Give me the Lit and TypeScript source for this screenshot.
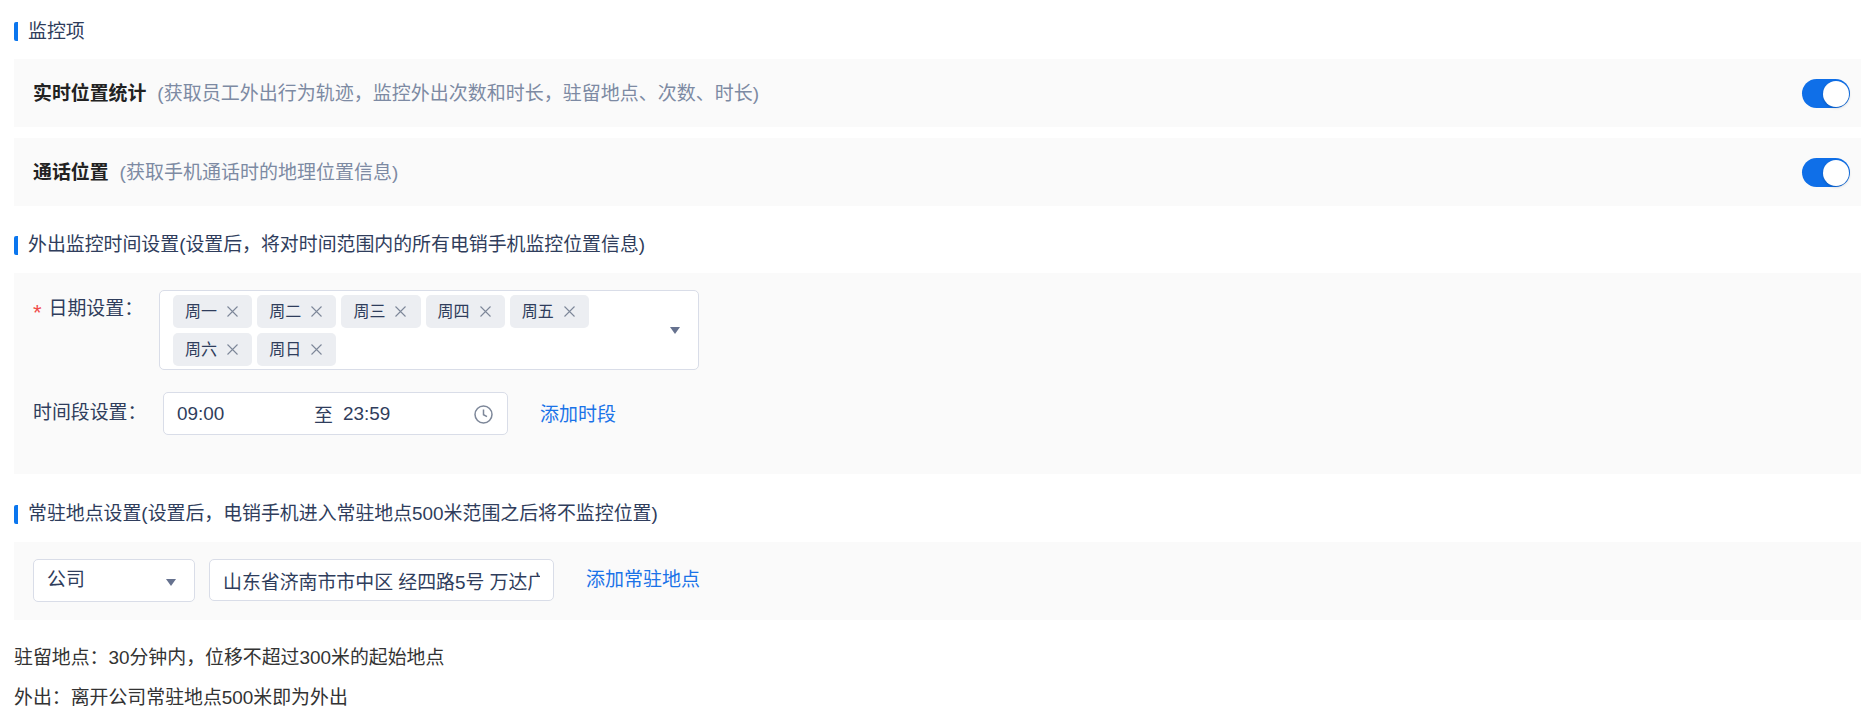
import { LitElement, html, css, svg } from "lit";
import { customElement } from "lit/decorators.js";

const days = ["周一", "周二", "周三", "周四", "周五", "周六", "周日"];
const caret = svg`<svg class="caret" width="10" height="7" viewBox="0 0 10 7"><path d="M0 0h10L5 7z" fill="#66728f"/></svg>`;

@customElement("app-root")
export class AppRoot extends LitElement {
  static styles = css`
    :host { display: block; height: 726px; overflow: hidden; background: #fff; color: #2f3d5c;
      font-family: "Liberation Sans", "Noto Sans CJK SC", sans-serif; font-size: 18.9px; }
    .page { padding: 22px 0 0 14px; display: flex; flex-direction: column; }
    .title { height: 19px; line-height: 19px; box-sizing: border-box; display: flex; align-items: center; border-left: 4px solid #0b76ee; border-radius: 2px; padding-left: 10px; white-space: nowrap; }
    .up { padding-bottom: 2px; }
    .row { height: 68px; background: #fafafa; display: flex; align-items: center; padding: 0 11px 0 19px; }
    .r1 { margin-top: 18px; }
    .r2 { margin-top: 11px; margin-bottom: 30px; }
    .row b { font-weight: 700; color: #222; margin: 0 11px 3px 0; }
    .hint { color: #7d8aa3; margin-bottom: 3px; font-size: 19px; }
    .sw { margin-left: auto; width: 48px; height: 29px; border-radius: 15px; background: #0f6fe8; position: relative; }
    .knob { position: absolute; right: 1px; top: 2px; width: 26px; height: 26px; border-radius: 50%; background: #fff; box-shadow: 0 1px 3px rgba(0,0,0,.2); }
    .panel { background: #fafafa; margin-top: 18px; padding: 17px 19px; height: 201px; box-sizing: border-box; }
    .line { display: flex; align-items: flex-start; }
    .lab { white-space: nowrap; width: 126px; padding-top: 3px; }
    .req { color: #f04b4b; margin-right: 7px; font-size: 22px; line-height: 1; vertical-align: -5px; }
    .multi { width: 540px; height: 80px; box-sizing: border-box; background: #fff; border: 1px solid #d9dde8; border-radius: 5px; padding: 4px 13px; display: flex; align-items: center; }
    .tags { width: 480px; display: flex; flex-wrap: wrap; gap: 5px; }
    .tag { width: 79.2px; height: 33px; box-sizing: border-box; background: #eceef2; border-radius: 5px; font-size: 16px; display: flex; align-items: center; padding-left: 12px; gap: 10px; }
    .tag span { margin-bottom: 2px; }
    .multi .caret { margin-left: 17px; margin-top: 1px; }
    .l2 { margin-top: 22px; align-items: center; }
    .l2 .lab { padding-top: 0; width: 130px; margin-top: -7px; }
    .time { width: 345px; height: 43px; box-sizing: border-box; background: #fff; border: 1px solid #d9dde8; border-radius: 5px; display: flex; align-items: center; padding: 0 14px 0 13px; }
    .t1 { width: 137px; }
    .t2 { margin-left: 10px; }
    .time svg { margin-left: auto; margin-top: 1px; }
    .link { color: #1a73e8; margin-left: 32px; white-space: nowrap; font-size: 19px; }
    .l2 .link { margin-top: -2px; }
    .t3 { margin-top: 31px; }
    .panel2 { background: #fafafa; margin-top: 18px; height: 78px; display: flex; align-items: flex-start; padding: 17px 19px 0; box-sizing: border-box; }
    .sel { width: 162px; height: 43px; box-sizing: border-box; background: #fff; border: 1px solid #d9dde8; border-radius: 5px; display: flex; align-items: center; justify-content: space-between; padding: 0 18px 0 13px; }
    .sel span { margin-bottom: 6px; }
    .sel .caret { margin-top: 3px; }
    .inp { width: 345px; height: 42px; box-sizing: border-box; background: #fff; border: 1px solid #d9dde8; border-radius: 5px; margin-left: 14px; padding: 0 13px; display: flex; align-items: center; white-space: nowrap; }
    .inp span { flex: 1; overflow: hidden; }
    .panel2 .link { line-height: 42px; }
    .note { margin-top: 28px; color: #333; line-height: 19px; white-space: nowrap; }
    .note + .note { margin-top: 21px; }
  `;

  render() {
    return html`<div class="page">
      <div class="title">监控项</div>
      <div class="row r1"><b>实时位置统计</b><span class="hint">(获取员工外出行为轨迹，监控外出次数和时长，驻留地点、次数、时长)</span><div class="sw"><div class="knob"></div></div></div>
      <div class="row r2"><b>通话位置</b><span class="hint">(获取手机通话时的地理位置信息)</span><div class="sw"><div class="knob"></div></div></div>
      <div class="title up">外出监控时间设置(设置后，将对时间范围内的所有电销手机监控位置信息)</div>
      <div class="panel">
        <div class="line">
          <div class="lab"><span class="req">*</span>日期设置：</div>
          <div class="multi"><div class="tags">${days.map(d => html`<div class="tag"><span>${d}</span><svg width="11" height="11" viewBox="0 0 11 11"><path d="M.5.5l10 10M10.500.5l-10 10" stroke="#7d8799" stroke-width="1.1" fill="none"/></svg></div>`)}</div>${caret}</div>
        </div>
        <div class="line l2">
          <div class="lab">时间段设置：</div>
          <div class="time"><span class="t1">09:00</span><span>至</span><span class="t2">23:59</span>
            <svg width="19" height="19" viewBox="0 0 19 19" fill="none" stroke="#7d8799" stroke-width="1.5"><circle cx="9.500" cy="9.500" r="8.500"/><path d="M9.500 4.500v5.200l3.500 2"/></svg></div>
          <span class="link">添加时段</span>
        </div>
      </div>
      <div class="title t3 up">常驻地点设置(设置后，电销手机进入常驻地点500米范围之后将不监控位置)</div>
      <div class="panel2">
        <div class="sel"><span>公司</span>${caret}</div>
        <div class="inp"><span>山东省济南市市中区 经四路5号 万达广</span></div>
        <span class="link">添加常驻地点</span>
      </div>
      <div class="note">驻留地点：30分钟内，位移不超过300米的起始地点</div>
      <div class="note">外出：离开公司常驻地点500米即为外出</div>
    </div>`;
  }
}
